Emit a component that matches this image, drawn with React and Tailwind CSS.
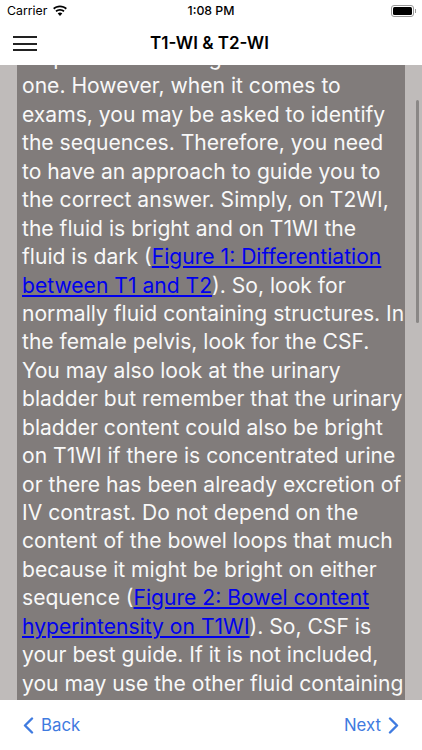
import React from "react";

const Line = ({ children }) => (
  <div className="h-[28.45px] whitespace-nowrap">{children}</div>
);

const Link = ({ children }) => (
  <a href="#" className="text-[#0000ee] underline">
    {children}
  </a>
);

export default function App() {
  return (
    <div className="w-[422px] h-[750px] flex flex-col bg-white overflow-hidden font-['Inter',sans-serif]">
      <div className="h-[65px] shrink-0 flex flex-col">
        <div className="h-[22px] grid grid-cols-[1fr_auto_1fr] items-center px-[7px] text-[12.3px] text-black">
          <div className="flex items-center gap-[5px]">
            <span>Carrier</span>
            <svg width="16" height="12" viewBox="0 0 16 12" fill="black">
              <path d="M8 2.200c2.200 0 4.200.8 5.700 2.200l1.200-1.300C13.100 1.400 10.700.4 8 .4S2.900 1.400 1.100 3.100l1.200 1.300C3.800 3 5.800 2.200 8 2.200z" />
              <path d="M8 5.700c1.300 0 2.500.5 3.400 1.300l1.200-1.300C11.400 4.600 9.800 3.900 8 3.900s-3.400.7-4.600 1.800L4.600 7c.9-.8 2.100-1.300 3.400-1.300z" />
              <path d="M8 7.500c-.9 0-1.700.3-2.300.9L8 11l2.300-2.600c-.6-.6-1.400-.9-2.300-.9z" />
            </svg>
          </div>
          <span className="font-medium">1:08 PM</span>
          <div className="flex items-center justify-end gap-[1px] mr-[-1px]">
            <div className="w-[23px] h-[12px] rounded-[3px] border border-[#999] p-[1px]">
              <div className="w-full h-full bg-black rounded-[1.5px]" />
            </div>
            <div className="w-[1px] h-[4px] bg-[#999]" />
          </div>
        </div>
        <div className="flex-1 grid grid-cols-[1fr_auto_1fr] items-center pr-[3px]">
          <div className="ml-[13px] w-[24px] flex flex-col gap-[4.5px]">
            <div className="h-[2px] bg-[#222]" />
            <div className="h-[2px] bg-[#222]" />
            <div className="h-[2px] bg-[#222]" />
          </div>
          <div className="text-[17px] font-semibold text-black">
            T1-WI &amp; T2-WI
          </div>
        </div>
      </div>

      <div className="relative flex-1 bg-[#bfbbba] overflow-hidden">
        <div className="mx-[17px] h-full bg-[#817c7b] overflow-hidden">
          <div className="pl-[5px] text-[#f8f8f8] text-[21.1px] leading-[28.45px] mt-[-21px]">
            <Line>sequence is a straightforward</Line>
            <Line>one. However, when it comes to</Line>
            <Line>exams, you may be asked to identify</Line>
            <Line>the sequences. Therefore, you need</Line>
            <Line>to have an approach to guide you to</Line>
            <Line>the correct answer. Simply, on T2WI,</Line>
            <Line>the fluid is bright and on T1WI the</Line>
            <Line>
              fluid is dark (<Link>Figure 1: Differentiation</Link>
            </Line>
            <Line>
              <Link>between T1 and T2</Link>). So, look for
            </Line>
            <Line>normally fluid containing structures. In</Line>
            <Line>the female pelvis, look for the CSF.</Line>
            <Line>You may also look at the urinary</Line>
            <Line>bladder but remember that the urinary</Line>
            <Line>bladder content could also be bright</Line>
            <Line>on T1WI if there is concentrated urine</Line>
            <Line>or there has been already excretion of</Line>
            <Line>IV contrast. Do not depend on the</Line>
            <Line>content of the bowel loops that much</Line>
            <Line>because it might be bright on either</Line>
            <Line>
              sequence (<Link>Figure 2: Bowel content</Link>
            </Line>
            <Line>
              <Link>hyperintensity on T1WI</Link>). So, CSF is
            </Line>
            <Line>your best guide. If it is not included,</Line>
            <Line>you may use the other fluid containing</Line>
          </div>
        </div>
        <div className="absolute left-[416px] top-[35px] w-[2.5px] h-[223px] rounded-full bg-[#8a8786]" />
      </div>

      <div className="h-[50px] shrink-0 flex items-center justify-between px-[23px] pt-[1px] text-[16.8px] text-[#3f7be0]">
        <div className="flex items-center gap-[7px]">
          <svg width="11" height="17" viewBox="0 0 11 17" fill="none" stroke="currentColor" strokeWidth="2.4" strokeLinecap="round" strokeLinejoin="round">
            <path d="M9 1.500 2 8.500l7 7" />
          </svg>
          <span>Back</span>
        </div>
        <div className="flex items-center gap-[7px]">
          <span>Next</span>
          <svg width="11" height="17" viewBox="0 0 11 17" fill="none" stroke="currentColor" strokeWidth="2.4" strokeLinecap="round" strokeLinejoin="round">
            <path d="M2 1.500 9 8.500l-7 7" />
          </svg>
        </div>
      </div>
    </div>
  );
}
